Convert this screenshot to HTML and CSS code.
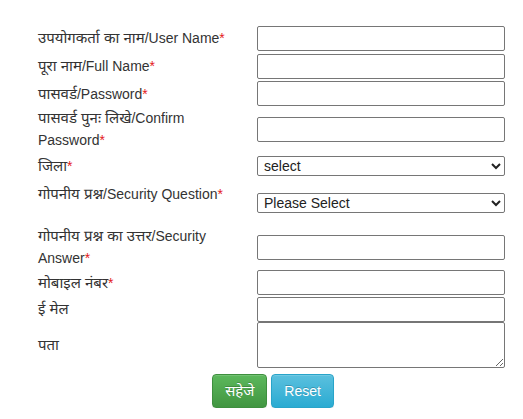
FILE: index.html
```html
<!DOCTYPE html>
<html>
<head>
<meta charset="utf-8">
<link rel="stylesheet" href="styles.css">
</head>
<body>
<form class="form">
  <div class="row r28">
    <label class="lbl"><span class="dv">उपयोगकर्ता का नाम</span>/User Name<span class="req">*</span></label>
    <div class="ctl"><input class="inp" type="text"></div>
  </div>
  <div class="row r28">
    <label class="lbl"><span class="dv">पूरा नाम</span>/Full Name<span class="req">*</span></label>
    <div class="ctl"><input class="inp" type="text"></div>
  </div>
  <div class="row r27">
    <label class="lbl"><span class="dv">पासवर्ड</span>/Password<span class="req">*</span></label>
    <div class="ctl"><input class="inp" type="password"></div>
  </div>
  <div class="row r44">
    <label class="lbl narrow"><span class="dv">पासवर्ड पुनः लिखे</span>/Confirm Password<span class="req">*</span></label>
    <div class="ctl"><input class="inp" type="password"></div>
  </div>
  <div class="row r30">
    <label class="lbl"><span class="dv">जिला</span><span class="req">*</span></label>
    <div class="ctl"><select class="sel"><option>select</option></select></div>
  </div>
  <div class="row r44">
    <label class="lbl pad-b"><span class="dv">गोपनीय प्रश्न</span>/Security Question<span class="req">*</span></label>
    <div class="ctl"><select class="sel"><option>Please Select</option></select></div>
  </div>
  <div class="row r44">
    <label class="lbl narrow"><span class="dv">गोपनीय प्रश्न का उत्तर</span>/Security Answer<span class="req">*</span></label>
    <div class="ctl"><input class="inp" type="text"></div>
  </div>
  <div class="row r27">
    <label class="lbl"><span class="dv">मोबाइल नंबर</span><span class="req">*</span></label>
    <div class="ctl"><input class="inp" type="text"></div>
  </div>
  <div class="row r26">
    <label class="lbl"><span class="dv">ई मेल</span></label>
    <div class="ctl"><input class="inp" type="text"></div>
  </div>
  <div class="row r46">
    <label class="lbl"><span class="dv">पता</span></label>
    <div class="ctl"><textarea class="ta"></textarea></div>
  </div>
  <div class="actions">
    <button type="button" class="btn btn-success"><span class="dv">सहेजे</span></button>
    <button type="reset" class="btn btn-info">Reset</button>
  </div>
</form>
</body>
</html>
```
FILE: styles.css
```css
html, body {
  margin: 0;
  padding: 0;
  background: #fff;
}
body {
  font-family: "Liberation Sans", Arial, "Noto Sans Devanagari", "Lohit Devanagari", "FreeSans", sans-serif;
  font-size: 14px;
  color: #333;
}
.form {
  width: 467px;
  margin: 24px 0 0 38px;
}
.row {
  display: grid;
  grid-template-columns: 219px 248px;
  align-items: center;
}
.r26 { height: 26px; }
.r27 { height: 27px; }
.r28 { height: 28px; }
.r30 { height: 30px; }
.r44 { height: 44px; }
.r46 { height: 46px; }
.lbl {
  display: block;
  line-height: 22px;
}
.dv {
  font-size: 15px;
}
.narrow {
  max-width: 178px;
}
.pad-b {
  padding-bottom: 18px;
}
.req {
  color: #e41a1a;
}
.ctl {
  display: flex;
  align-items: center;
}
.inp {
  box-sizing: border-box;
  width: 248px;
  height: 25px;
  margin: 0;
  border: 1px solid #767676;
  border-radius: 2px;
  padding: 1px 2px;
  font: 14px "Liberation Sans", Arial, sans-serif;
}
.sel {
  box-sizing: border-box;
  width: 248px;
  height: 20px;
  margin: 0;
  border: 1px solid #767676;
  border-radius: 2px;
  padding: 0 0 0 2px;
  font: 14px "Liberation Sans", Arial, sans-serif;
  color: #222;
  background: #fff;
}
.ta {
  box-sizing: border-box;
  display: block;
  width: 248px;
  height: 46px;
  margin: 0;
  border: 1px solid #767676;
  border-radius: 2px;
  font: 14px "Liberation Sans", Arial, sans-serif;
}
.actions {
  margin-top: 6px;
  text-align: center;
  padding-left: 3px;
}
.btn {
  display: inline-block;
  box-sizing: border-box;
  height: 34px;
  padding: 6px 12px;
  font-family: "Liberation Sans", Arial, "Noto Sans Devanagari", "Lohit Devanagari", "FreeSans", sans-serif;
  font-size: 14px;
  line-height: 20px;
  color: #fff;
  border: 1px solid transparent;
  border-radius: 4px;
  text-shadow: 0 -1px 0 rgba(0,0,0,.2);
  box-shadow: inset 0 1px 0 rgba(255,255,255,.15), 0 1px 1px rgba(0,0,0,.075);
  vertical-align: middle;
  cursor: pointer;
}
.btn-success {
  background-image: linear-gradient(to bottom, #5cb85c 0, #419641 100%);
  border-color: #3e8f3e;
}
.btn-info {
  background-image: linear-gradient(to bottom, #5bc0de 0, #2aabd2 100%);
  border-color: #28a4c9;
}
```
